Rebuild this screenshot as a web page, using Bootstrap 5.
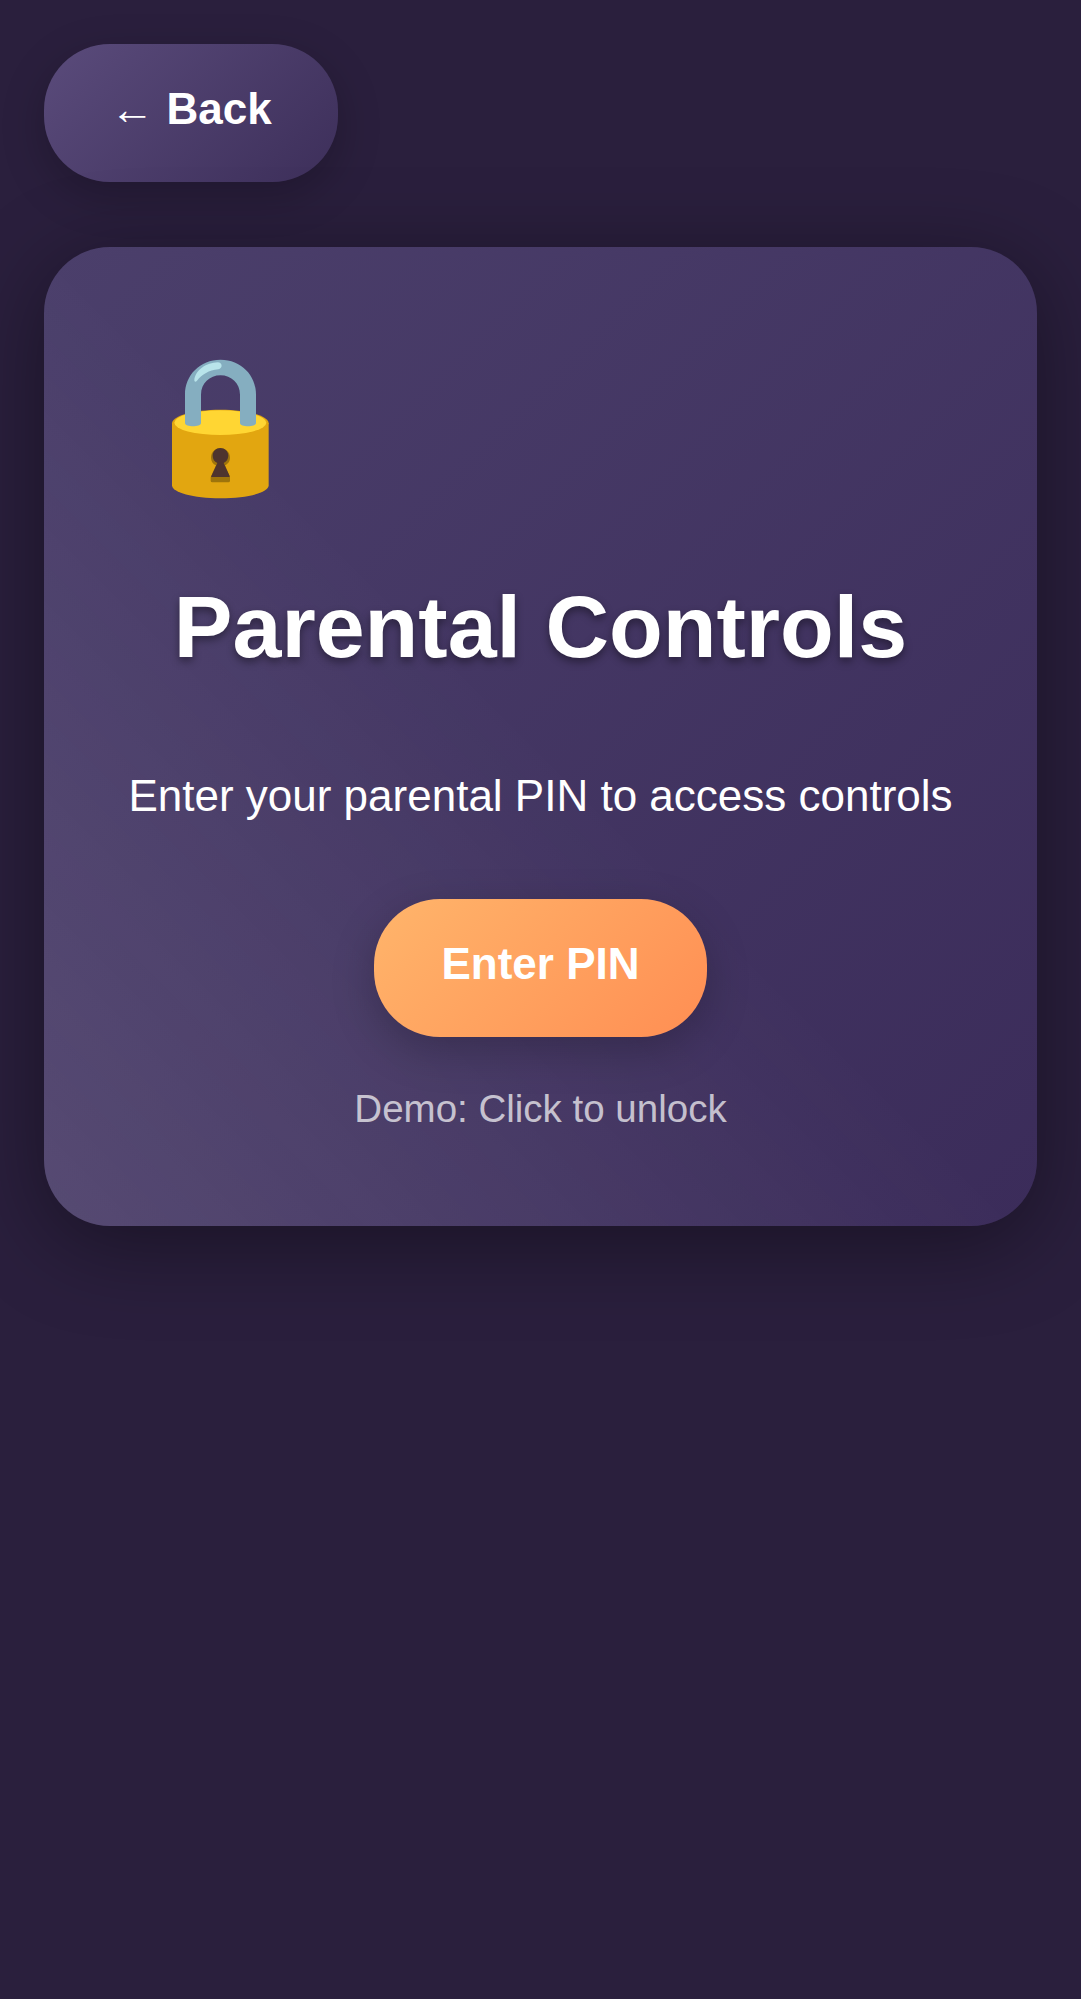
<!DOCTYPE html>
<html lang="en">
<head>
<meta charset="utf-8">
<meta name="viewport" content="width=device-width, initial-scale=1">
<title>Parental Controls</title>
<link href="https://cdn.jsdelivr.net/npm/bootstrap@5.3.0/dist/css/bootstrap.min.css" rel="stylesheet">
<style>
body{background:#2a1f3d;color:#fff;font-family:"Liberation Sans",Arial,sans-serif;font-size:44px;line-height:50px;min-height:1999px}
.screen{padding:44px}
.pill{border:0;border-radius:66px;height:137.5px;padding:40px 0 47.5px;font-weight:700;font-size:44px;line-height:50px;color:#fff;text-align:center;box-shadow:0 13.2px 44px rgba(0,0,0,.22)}
.pill-back{width:294px;background:linear-gradient(135deg,#5a4b7b,#3d2f5a)}
.pill-pin{width:332.6px;background:linear-gradient(135deg,#ffb56b,#ff8e53)}
.panel{margin-top:65.9px;height:979.1px;border-radius:66px;padding-top:92.6px;background:linear-gradient(45deg,rgba(255,255,255,.1),transparent 50%),linear-gradient(135deg,#4b3f6b,#3b2c5a);box-shadow:0 17.6px 88px rgba(0,0,0,.4)}
.lock{width:140px;height:170px;margin-left:106px}
.title{font-size:88px;line-height:100px;font-weight:700;margin:66.8px 0 0;text-shadow:0 4.4px 8.8px rgba(0,0,0,.4)}
.lead-in{margin:94.2px 0 78.1px}
.hint{font-size:38.5px;line-height:44px;margin:50.4px 0 0;color:rgba(255,255,255,.7)}
</style>
<script src="https://cdn.jsdelivr.net/npm/bootstrap@5.3.0/dist/js/bootstrap.bundle.min.js"></script>
</head>
<body>
<main class="screen d-flex flex-column">
  <button class="pill pill-back align-self-start d-block" type="button">← Back</button>
  <section class="panel d-flex flex-column align-items-center text-center">
    <svg class="lock align-self-start flex-shrink-0" viewBox="0 0 420 510" role="img" aria-label="Locked">
      <path d="M66 250V436C66 458 130 475 211 475S356 458 356 436V250Z" fill="#e2a610"/>
      <path d="M66 250C66 228 130 209 211 209S356 228 356 250C350 270 290 285 211 285S72 270 66 250Z" fill="#e2a610"/>
      <ellipse cx="211" cy="248" rx="138" ry="37" fill="#ffd633"/>
      <path d="M105 249V164C105 105 150 59 211.500 59S318 105 318 164V249C318 262 270 262 270 249V164C270 130 244 106 211.500 106S153 130 153 164V249C153 262 105 262 105 249Z" fill="#85aec0"/>
      <path d="M133 121C136 90 170 68 203 67C218 67 219 86 205 88C176 91 157 103 141 122C137 127 133 126 133 121Z" fill="#b8e4ea"/>
      <path d="M183 353C183 337 195 325 211 325S240 337 240 353C240 365 232 373 225 376L240 412V422Q240 427 235 427H187Q182 427 182 422V412L198 376C189 372 183 364 183 353Z" fill="#9e740b"/>
      <path d="M188 347C188 334 198 324 211 324S235 334 235 347C235 357 229 365 221 369L239 408Q240 411 237 411H185Q182 411 184 408L202 369C193 365 188 357 188 347Z" fill="#4e342e"/>
    </svg>
    <h1 class="title">Parental Controls</h1>
    <p class="lead-in">Enter your parental PIN to access controls</p>
    <button class="pill pill-pin d-block" type="button">Enter PIN</button>
    <p class="hint">Demo: Click to unlock</p>
  </section>
</main>
</body>
</html>
